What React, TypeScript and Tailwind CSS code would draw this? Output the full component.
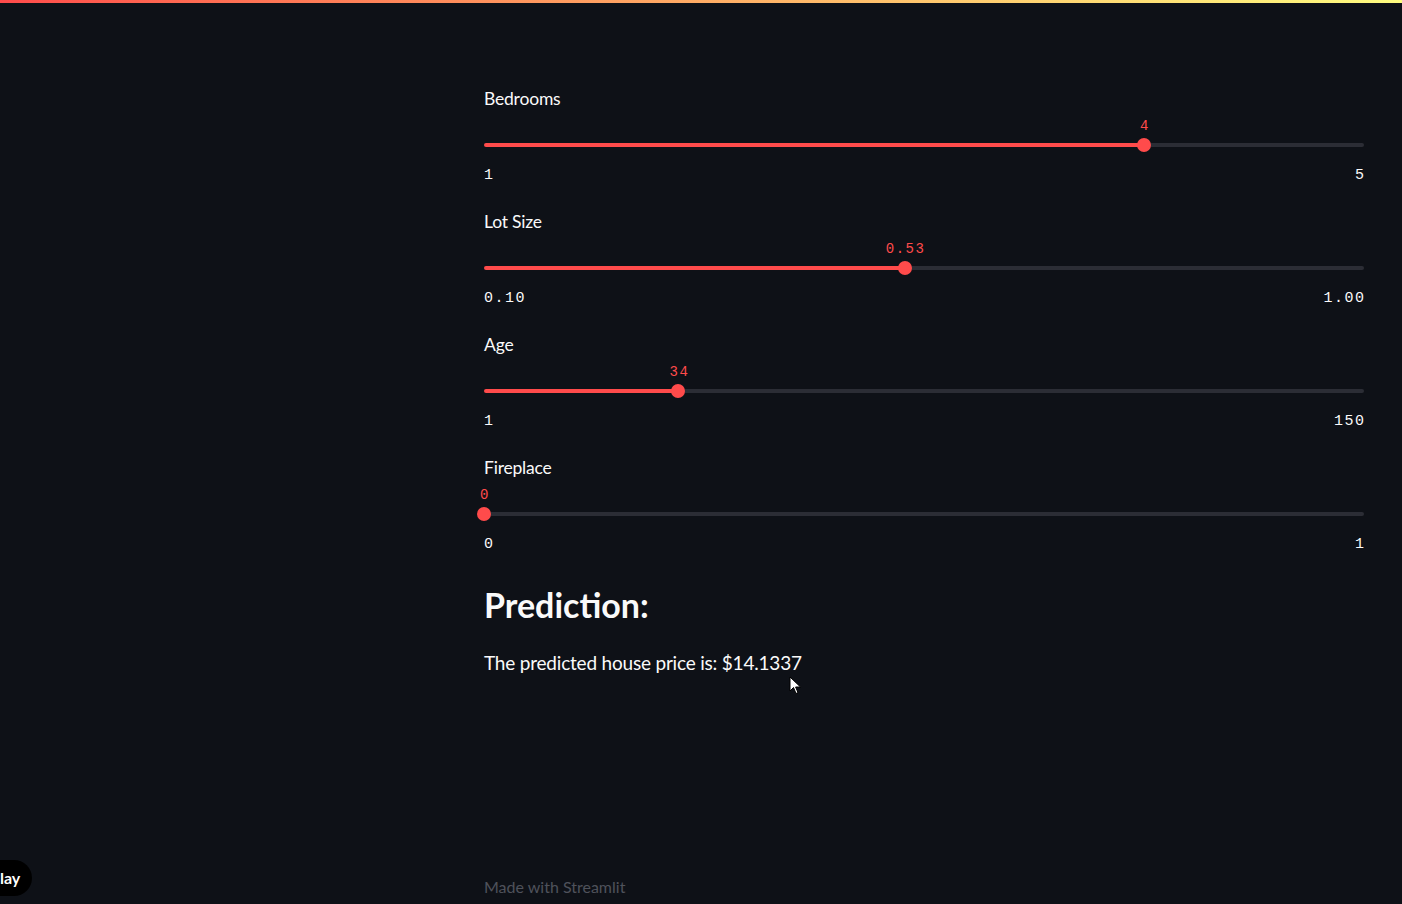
import React from 'react';

type SliderProps = { label: string; min: string; max: string; value: string; pct: number };

const mono = { fontFamily: '"Liberation Mono", "DejaVu Sans Mono", monospace' };

const Slider: React.FC<SliderProps> = ({ label, min, max, value, pct }) => (
  <div className="mb-[24px] flex flex-col">
    <div className="h-6 text-[17.5px] leading-6 text-[#fafafa] tracking-[-0.2px]">{label}</div>
    <div className="mt-[6px] flex h-[18px] text-[14px] leading-[18px] tracking-[1.5px] text-[#ff4b4b]" style={mono}>
      <div className="shrink-0" style={{ width: `calc(${pct}% + 1px)` }} />
      <div className="shrink-0 -translate-x-1/2">{value}</div>
    </div>
    <div className="mt-[3px] flex h-[14px] items-center">
      <div className="h-1 shrink-0 rounded-l-full bg-[#ff4b4b]" style={{ width: `${pct}%` }} />
      <div className="z-10 -mx-[7px] h-[14px] w-[14px] shrink-0 rounded-full bg-[#ff4b4b]" />
      <div className="h-1 flex-1 rounded-r-full bg-[#2b2d35]" />
    </div>
    <div className="mt-[14px] flex justify-between text-[15px] leading-5 tracking-[1.5px] text-[#fafafa]" style={mono}>
      <span>{min}</span>
      <span className="-mr-[1.5px]">{max}</span>
    </div>
  </div>
);

export default function App() {
  return (
    <div
      className="relative flex h-[904px] w-full flex-col overflow-hidden bg-[#0e1117] text-[#fafafa]"
      style={{ fontFamily: '"Lato", "Noto Sans", sans-serif' }}
    >
      <div className="h-[3px] w-full shrink-0 bg-gradient-to-r from-[#ff4b4b] to-[#fffd80]" />
      <div className="ml-[484px] flex w-[880px] flex-col pt-[84px]">
        <Slider label="Bedrooms" min="1" max="5" value="4" pct={75} />
        <Slider label="Lot Size" min="0.10" max="1.00" value="0.53" pct={47.8} />
        <Slider label="Age" min="1" max="150" value="34" pct={22.1} />
        <Slider label="Fireplace" min="0" max="1" value="0" pct={0} />
        <h2 className="mt-[6px] text-[34px] font-bold leading-10 text-[#fafafa]">Prediction:</h2>
        <p className="mt-[24px] text-[19px] leading-7 tracking-[-0.2px] text-[#fafafa]">The predicted house price is: $14.1337</p>
        <div className="mt-[200px] text-[16px] leading-5 text-[#4f525b]">Made with Streamlit</div>
      </div>

      <svg className="absolute left-[789px] top-[676px]" width="14" height="20" viewBox="0 0 14 20">
        <path d="M1 1 L1 15 L4.5 11.5 L7 17.5 L9 16.6 L6.6 11 L11.5 11 Z" fill="#fff" stroke="#000" strokeWidth="1" />
      </svg>

      <div className="absolute -left-[20px] top-[860px] flex h-9 items-center rounded-full bg-black pl-[20px] pr-3 text-[16px] font-bold text-white">
        lay
      </div>
    </div>
  );
}
